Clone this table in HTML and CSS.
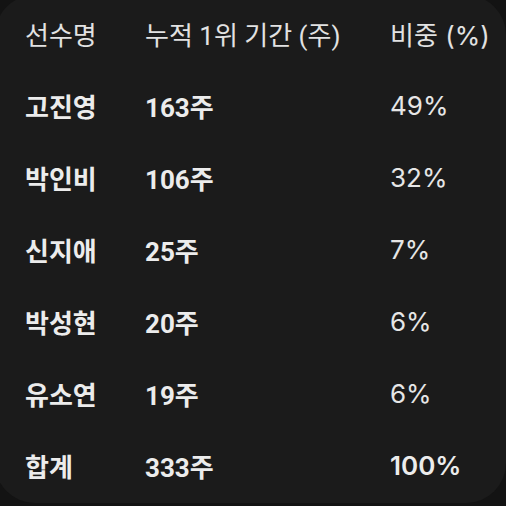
FILE: index.html
```html
<!DOCTYPE html>
<html lang="ko">
<head>
<meta charset="utf-8">
<link rel="stylesheet" href="styles.css">
</head>
<body>
<div class="card">
  <div class="table">
    <div class="cell head">선수명</div>
    <div class="cell head">누적 1위 기간 (주)</div>
    <div class="cell head pct">비중 (%)</div>

    <div class="cell bold">고진영</div>
    <div class="cell bold">163주</div>
    <div class="cell pct">49%</div>

    <div class="cell bold">박인비</div>
    <div class="cell bold">106주</div>
    <div class="cell pct">32%</div>

    <div class="cell bold">신지애</div>
    <div class="cell bold">25주</div>
    <div class="cell pct">7%</div>

    <div class="cell bold">박성현</div>
    <div class="cell bold">20주</div>
    <div class="cell pct">6%</div>

    <div class="cell bold">유소연</div>
    <div class="cell bold">19주</div>
    <div class="cell pct">6%</div>

    <div class="cell bold">합계</div>
    <div class="cell bold">333주</div>
    <div class="cell bold pct">100%</div>
  </div>
</div>
</body>
</html>
```

FILE: styles.css
```css
html, body {
  margin: 0;
  padding: 0;
  background: #131313;
}
body {
  width: 506px;
  height: 506px;
  overflow: hidden;
  font-family: "Roboto", "Noto Sans CJK KR", sans-serif;
}
.card {
  width: 511px;
  height: 508px;
  margin: -5px 0 0 -5px;
  box-sizing: border-box;
  background: #1b1b1b;
  border-radius: 40px;
  padding: 2px 0 0 30px;
}
.table {
  display: grid;
  grid-template-columns: 120px 245px 1fr;
  grid-auto-rows: 72px;
}
.cell {
  display: flex;
  align-items: center;
  font-size: 26px;
  color: #e6e6e6;
  font-weight: 400;
  white-space: nowrap;
}
.head {
  color: #e2e2e2;
  font-weight: 400;
}
.pct {
  font-family: "Inter", "Noto Sans CJK KR", sans-serif;
}
.bold {
  font-weight: 700;
  color: #ececec;
}
.pct.bold {
  font-weight: 600;
}
```
